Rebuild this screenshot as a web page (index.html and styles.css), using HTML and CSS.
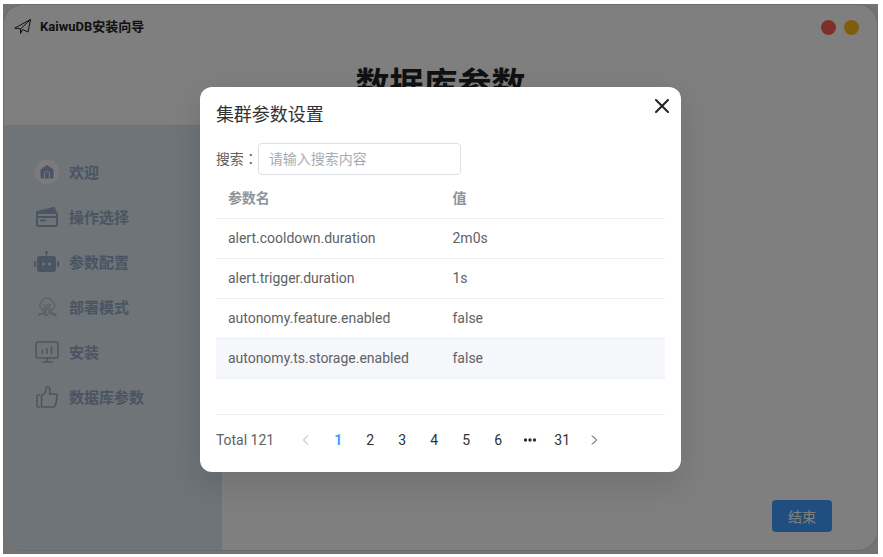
FILE: index.html
```
<!DOCTYPE html>
<html lang="zh-CN">
<head>
	<meta charset="UTF-8">
	<meta name="viewport" content="width=device-width, initial-scale=1.0">
	<title>KaiwuDB安装向导</title>
	<link rel="stylesheet" href="styles.css">
</head>
<body>

	<div class="app">
		<div class="window">

			<!-- Title bar -->
			<header class="header">
				<div class="titlebar">
					<svg class="logo" viewBox="0 0 18 18" fill="none" stroke="#222" stroke-linejoin="round" stroke-linecap="round">
						<path d="M1 10 16.500 1.500 14 14 8.500 11.500 6.500 15.500 6.500 11 16.500 1.500M1 10l5.500 1"/>
					</svg>
					<span class="app-name">KaiwuDB安装向导</span>
					<button type="button" class="dot dot-close" aria-label="关闭窗口"></button>
					<button type="button" class="dot dot-min" aria-label="最小化"></button>
				</div>
				<h1 class="page-title">数据库参数</h1>
			</header>

			<div class="content">
				<!-- Steps -->
				<nav class="sidebar">
					<a class="step" href="#welcome">
						<svg class="icon" viewBox="0 0 26 26">
							<circle cx="13" cy="13" r="12.500" fill="#f6f4f8"/>
							<path d="M6.500 10.500 13 6l6.500 4.500V18a1.500 1.500 0 0 1-1.500 1.500H8A1.500 1.500 0 0 1 6.500 18z" fill="currentColor"/>
							<path d="M10.500 19.500V15a2.500 2.500 0 0 1 5 0v4.500" fill="none" stroke="#f6f4f8"/>
						</svg>
						欢迎
					</a>
					<a class="step" href="#operation">
						<svg class="icon" viewBox="0 0 26 26" fill="none" stroke="currentColor" stroke-width="2" stroke-linejoin="round" stroke-linecap="round">
							<rect x="3" y="9" width="20" height="13" rx="1.500"/>
							<path d="M3 8 20 4l2 5H3z" fill="currentColor"/>
							<path d="M3 13h20M7 16.500h4"/>
						</svg>
						操作选择
					</a>
					<a class="step" href="#config">
						<svg class="icon" viewBox="0 0 26 26" fill="currentColor">
							<rect x="3" y="7" width="19" height="16" rx="3"/>
							<rect x="0" y="12" width="2" height="6" rx="1"/>
							<rect x="23" y="12" width="2" height="6" rx="1"/>
							<circle cx="12.500" cy="3.500" r="1.500"/>
							<path d="M12 4h1v4h-1z"/>
							<circle cx="9.500" cy="15" r="1.500" fill="#dce8f0"/>
							<circle cx="15.500" cy="15" r="1.500" fill="#dce8f0"/>
						</svg>
						参数配置
					</a>
					<a class="step" href="#deploy">
						<svg class="icon thin" viewBox="0 0 26 26" fill="none" stroke="currentColor" stroke-linecap="round">
							<path d="M7.500 15a4 4 0 0 1-.5-6.500A6 6 0 0 1 18.500 8a4 4 0 0 1 .5 7zM10 11h1M13 11h4M11 13h5"/>
							<path d="M9 16v3l-3 1M12 16v4M15 16v4M18 16v3l3 1M11 17l-2 4M16 17l2 4"/>
							<circle cx="5.500" cy="20.500" r="1"/>
							<circle cx="12" cy="21" r="1"/>
							<circle cx="21" cy="21" r="1"/>
						</svg>
						部署模式
					</a>
					<a class="step" href="#install">
						<svg class="icon" viewBox="0 0 26 26" fill="none" stroke="currentColor" stroke-width="1.500" stroke-linecap="round">
							<rect x="2" y="3" width="22" height="16" rx="2"/>
							<path d="M8.500 11v3.500M13 9.500v5M17.500 7.500v7M13 19v4M9 23h9"/>
						</svg>
						安装
					</a>
					<a class="step" href="#params">
						<svg class="icon" viewBox="0 0 26 26" fill="none" stroke="currentColor" stroke-width="1.500" stroke-linejoin="round" stroke-linecap="round">
							<path d="M5.500 11H4a1 1 0 0 0-1 1v10a1 1 0 0 0 1 1h1.500M7.500 11.500c3-1 4.500-3 4.500-7 0-2.500 4-2 4 1.500 0 2-.5 3.500-.5 4H22c1 0 1.500 1 1.300 2l-1.800 9c-.2 1.200-1 2-2 2H7.500z"/>
						</svg>
						数据库参数
					</a>
				</nav>

				<main class="main">
					<button type="button" class="finish">结束</button>
				</main>
			</div>
		</div>

		<!-- Cluster settings dialog -->
		<div class="overlay">
			<section class="dialog" role="dialog" aria-modal="true" aria-labelledby="dialog-title">
				<div class="dialog-header">
					<h2 id="dialog-title" class="dialog-title">集群参数设置</h2>
					<button type="button" class="close" aria-label="关闭">
						<svg viewBox="0 0 14 14" fill="none" stroke="#222" stroke-width="2" stroke-linecap="round"><path d="M1 1l12 12M13 1 1 13"/></svg>
					</button>
				</div>

				<div class="search">
					<label for="search" lang="zh-TW">搜索：</label>
					<input type="text" id="search" placeholder="请输入搜索内容">
				</div>

				<div class="table-wrap">
					<table class="table">
						<thead>
							<tr><th>参数名</th><th>值</th></tr>
						</thead>
						<tbody>
							<tr><td>alert.cooldown.duration</td><td>2m0s</td></tr>
							<tr><td>alert.trigger.duration</td><td>1s</td></tr>
							<tr><td>autonomy.feature.enabled</td><td>false</td></tr>
							<tr class="active"><td>autonomy.ts.storage.enabled</td><td>false</td></tr>
						</tbody>
					</table>
				</div>

				<div class="pagination">
					<span class="total">Total 121</span>
					<button type="button" aria-label="上一页" disabled>
						<svg class="arrow" viewBox="0 0 12 12" fill="none" stroke="currentColor"><path d="M8 1.500 3.500 6 8 10.500"/></svg>
					</button>
					<button type="button" class="current">1</button>
					<button type="button">2</button>
					<button type="button">3</button>
					<button type="button">4</button>
					<button type="button">5</button>
					<button type="button">6</button>
					<button type="button" aria-label="更多">
						<svg class="more" viewBox="0 0 14 14" fill="currentColor"><circle cx="2.500" cy="7" r="1.700"/><circle cx="7" cy="7" r="1.700"/><circle cx="11.500" cy="7" r="1.700"/></svg>
					</button>
					<button type="button">31</button>
					<button type="button" aria-label="下一页">
						<svg class="arrow" viewBox="0 0 12 12" fill="none" stroke="currentColor"><path d="M4 1.500 8.500 6 4 10.500"/></svg>
					</button>
				</div>
			</section>
		</div>
	</div>

</body>
</html>
```

FILE: styles.css
```
* {
	box-sizing: border-box;
}
body {
	margin: 0;
	padding: 4px 5px 3px 3px;
	font-family: Roboto, "Noto Sans CJK SC", sans-serif;
	font-size: 14px;
	color: #606266;
	background-color: #fff;
}
button, input {
	font: inherit;
}
button {
	padding: 0;
	border: none;
	background: none;
	cursor: pointer;
}
.app {
	position: relative;
	display: flex;
	min-height: calc(100vh - 7px);
	padding-bottom: 3px;
	background-color: #e6e6e6;
	overflow: hidden;
}

/* Window */
.window {
	flex: 1;
	display: flex;
	flex-direction: column;
	border: 1px solid #d4d4d4;
	border-radius: 20px;
	background-color: #fff;
	overflow: hidden;
}
.header {
	height: 120px;
}
.titlebar {
	display: flex;
	align-items: center;
	gap: 8px;
	height: 44px;
	padding: 0 18px 0 10px;
}
.logo {
	width: 18px;
	height: 18px;
}
.app-name {
	margin-right: auto;
	font-size: 13px;
	line-height: 20px;
	font-weight: bold;
	color: #222;
}
.dot {
	width: 15px;
	height: 15px;
	border-radius: 50%;
}
.dot-close {
	background-color: #ff5f57;
}
.dot-min {
	background-color: #ffbd17;
}
.page-title {
	margin: 10px 0 0;
	font-size: 34px;
	line-height: 52px;
	text-align: center;
	color: #222;
}
.content {
	flex: 1;
	display: flex;
}
.sidebar {
	width: 25%;
	padding: 24px 30px;
	background-color: #dce8f0;
}
.step {
	display: flex;
	align-items: center;
	gap: 9px;
	height: 45px;
	font-size: 15px;
	font-weight: bold;
	color: #94a9c4;
	text-decoration: none;
}
.icon {
	width: 26px;
	height: 26px;
}
.thin {
	opacity: .8;
}
.main {
	flex: 1;
	display: flex;
	justify-content: flex-end;
	align-items: flex-end;
	padding: 18px 45px;
}
.finish {
	width: 60px;
	height: 32px;
	border-radius: 4px;
	background-color: #409eff;
	color: #fff;
}

/* Dialog */
.overlay {
	position: absolute;
	inset: 0;
	background-color: rgba(0,0,0,0.5);
}
.dialog {
	width: 55%;
	margin: calc(15vh - 1px) auto 0;
	padding: 16px;
	border-radius: 12px;
	background-color: #fff;
	box-shadow: 0 12px 32px 4px rgba(0,0,0,0.1);
}
.dialog-header {
	display: flex;
	justify-content: space-between;
	align-items: flex-start;
	margin-right: -4px;
	margin-bottom: 16px;
}
.dialog-title {
	margin: 0;
	font-size: 18px;
	line-height: 24px;
	font-weight: normal;
	color: #303133;
}
.close {
	width: 14px;
	height: 14px;
	margin-top: -4px;
}
.close svg {
	display: block;
}
.search {
	display: flex;
	align-items: center;
	margin-bottom: 4px;
}
.search label {
	font-family: Roboto, "Noto Sans CJK TC", sans-serif;
	line-height: 20px;
}
.search input {
	width: 203px;
	height: 32px;
	padding: 0 10px;
	border: 1px solid #dcdfe6;
	border-radius: 4px;
	color: #606266;
}
.search input::placeholder {
	color: #a8abb2;
}
.table-wrap {
	height: 236px;
	border-bottom: 1px solid #ebeef5;
}
.table {
	width: 100%;
	table-layout: fixed;
	border-collapse: separate;
	border-spacing: 0;
}
.table th, .table td {
	height: 40px;
	padding: 0 12px;
	line-height: 20px;
	text-align: left;
	border-bottom: 1px solid #ebeef5;
}
.table th {
	color: #909399;
}
.table .active td {
	background-color: #f5f7fa;
}
.pagination {
	display: flex;
	align-items: center;
	margin-top: 9px;
}
.total {
	margin-right: 16px;
}
.pagination button {
	display: flex;
	justify-content: center;
	align-items: center;
	width: 32px;
	height: 32px;
	color: #303133;
}
.pagination button:disabled {
	color: #a8abb2;
}
.pagination .current {
	font-weight: bold;
	color: #409eff;
}
.arrow {
	width: 12px;
	height: 12px;
}
.more {
	width: 14px;
	height: 14px;
}
```
